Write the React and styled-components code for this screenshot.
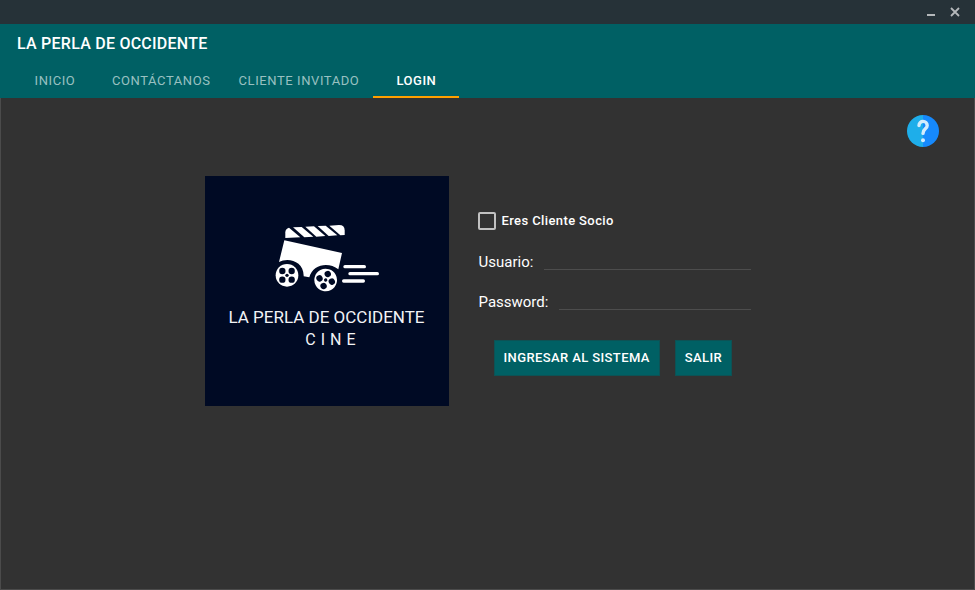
import React from "react";
import styled, { createGlobalStyle } from "styled-components";

const GlobalStyle = createGlobalStyle`
  *, *::before, *::after { box-sizing: border-box; }
  body {
    margin: 0;
    background: #323232;
    color: #ffffff;
    font-family: Roboto, "Liberation Sans", sans-serif;
  }
`;

const Window = styled.div`
  min-height: 100vh;
  display: flex;
  flex-direction: column;
`;

const TitleBar = styled.div`
  height: 24px;
  padding-right: 15px;
  display: flex;
  justify-content: flex-end;
  align-items: center;
  gap: 14px;
  background: #263238;
`;

const WindowButton = styled.button`
  width: 10px;
  height: 24px;
  padding: 0;
  border: 0;
  display: flex;
  align-items: center;
  justify-content: center;
  background: transparent;
  color: #b4b8ba;
  cursor: pointer;
`;

const Header = styled.header`
  background: #006064;
`;

const Title = styled.h1`
  margin: 0;
  padding: 8px 17px 0;
  font-size: 16px;
  line-height: 24px;
  font-weight: 500;
  letter-spacing: 0.015em;
`;

const Tabs = styled.nav`
  display: flex;
  padding: 8px 12px 0;
`;

const Tab = styled.button`
  min-width: 86px;
  height: 34px;
  padding: 2px 14px 0;
  border: 0;
  border-bottom: 2px solid ${(p) => (p.$active ? "#ffa000" : "transparent")};
  background: transparent;
  color: ${(p) => (p.$active ? "#ffffff" : "#99c0c1")};
  font: ${(p) => (p.$active ? 500 : 400)} 13px/30px Roboto, "Liberation Sans", sans-serif;
  letter-spacing: ${(p) => (p.$active ? "0.04em" : "0.045em")};
  cursor: pointer;
`;

const Body = styled.main`
  flex: 1;
  padding: 17px 35px 32px;
  border: 1px solid #4b4b4b;
  border-top: 0;
  display: flex;
  flex-direction: column;
`;

const HelpButton = styled.button`
  width: 32px;
  height: 32px;
  padding: 0;
  border: 0;
  border-radius: 50%;
  align-self: flex-end;
  display: flex;
  background: transparent;
  cursor: pointer;
`;

const Content = styled.div`
  display: flex;
  justify-content: center;
  gap: 29px;
  margin-top: 29px;
  padding-right: 20px;
`;

const Brand = styled.figure`
  width: 244px;
  height: 230px;
  margin: 0;
  padding-top: 47px;
  display: flex;
  flex-direction: column;
  align-items: center;
  background: #000a24;
  color: #f2f3f6;
`;

const BrandName = styled.figcaption`
  margin-top: 12px;
  font-size: 17px;
  line-height: 24px;
  text-align: center;
  white-space: nowrap;
`;

const BrandKind = styled.span`
  display: block;
  padding-left: 13px;
  font-size: 16px;
  letter-spacing: 5px;
  line-height: 22px;
`;

const Form = styled.form`
  width: 273px;
  padding-top: 35px;
  display: flex;
  flex-direction: column;
`;

const CheckLabel = styled.label`
  height: 20px;
  display: flex;
  align-items: center;
  gap: 6px;
  font-size: 13px;
  line-height: 20px;
  font-weight: 500;
  letter-spacing: 0.03em;
`;

const Checkbox = styled.input`
  appearance: none;
  width: 18px;
  height: 18px;
  margin: 0;
  border: 2px solid #c1c1c1;
  border-radius: 2px;
  &:checked { background: #00838f; }
`;

const Field = styled.div`
  height: 20px;
  margin-top: 20px;
  padding-left: 1px;
  display: flex;
  gap: 11px;
`;

const FieldLabel = styled.label`
  font-size: 15px;
  line-height: 22px;
`;

const TextInput = styled.input`
  flex: 1;
  min-width: 0;
  height: 19px;
  padding: 0 2px;
  border: 0;
  border-bottom: 1px solid #4d4d4d;
  outline: 0;
  background: transparent;
  color: #ffffff;
  font: 14px Roboto, sans-serif;
`;

const Actions = styled.div`
  display: flex;
  gap: 15px;
  margin-top: 29px;
  padding-left: 16px;
`;

const ActionButton = styled.button`
  height: 36px;
  padding: 0 9px;
  border: 1px solid #0d5255;
  background: #006064;
  color: #ffffff;
  font: 500 13px/20px Roboto, "Liberation Sans", sans-serif;
  letter-spacing: 0.03em;
  white-space: nowrap;
  cursor: pointer;
`;

const TABS = ["INICIO", "CONTÁCTANOS", "CLIENTE INVITADO", "LOGIN"];

function Reel({ x, y, angle }) {
  return (
    <g transform={`translate(${x} ${y}) rotate(${angle})`}>
      <circle r="34" fill="#ffffff" />
      <g fill="#000a24">
        <circle r="5" />
        <circle cx="-14" cy="-13" r="9.5" />
        <circle cx="14" cy="-13" r="9.5" />
        <circle cx="-14" cy="13" r="9.5" />
        <circle cx="14" cy="13" r="9.5" />
      </g>
    </g>
  );
}

function CinemaCart() {
  return (
    <svg width="110" height="70" viewBox="201 141 330 210" aria-hidden="true">
      <g fill="#ffffff">
        <path d="M241 186V169Q241 158 252 155L286 184Z" />
        <path d="M264 154L290 153L325 182L298 184Z" />
        <path d="M301 152L327 151L361 180L334 182Z" />
        <path d="M338 150L362 149L397 178L371 180Z" />
        <path d="M373 149L402 147Q419 147 419 163V177L406 178Z" />
        <path d="M238 193L411 231L400 280C372 257 323 264 313 304L296 301C297 255 249 243 222 258Z" />
      </g>
      <Reel x="246" y="298" angle={0} />
      <Reel x="362" y="312" angle={-28} />
      <g stroke="#ffffff" strokeWidth="10" strokeLinecap="round">
        <path d="M420 272H478" />
        <path d="M435 293H517" />
        <path d="M416 315H475" />
      </g>
    </svg>
  );
}

function HelpIcon() {
  return (
    <svg width="32" height="32" viewBox="0 0 32 32" aria-hidden="true">
      <path d="M16 0A16 16 0 0 0 16 32Z" fill="#1eaeea" />
      <path d="M16 0A16 16 0 0 1 16 32Z" fill="#1689fc" />
      <path
        d="M12 10.6C12 4.8 20.2 5.2 20.2 10.4C20.2 14 16 13.8 16 18.4"
        fill="none"
        stroke="#d2ecfd"
        strokeWidth="3.4"
        strokeLinecap="round"
        strokeLinejoin="round"
      />
      <circle cx="16" cy="25.3" r="2" fill="#d2ecfd" />
    </svg>
  );
}

export default function App() {
  return (
    <>
      <GlobalStyle />
      <Window>
        <TitleBar>
          <WindowButton type="button" aria-label="Minimizar">
            <svg width="10" height="10" viewBox="0 0 10 10">
              <path d="M1 8H9" stroke="currentColor" strokeWidth="2" />
            </svg>
          </WindowButton>
          <WindowButton type="button" aria-label="Cerrar">
            <svg width="10" height="10" viewBox="0 0 10 10">
              <path d="M1 1L9 9M9 1L1 9" stroke="currentColor" strokeWidth="1.8" />
            </svg>
          </WindowButton>
        </TitleBar>
        <Header>
          <Title>LA PERLA DE OCCIDENTE</Title>
          <Tabs>
            {TABS.map((name) => (
              <Tab key={name} type="button" $active={name === "LOGIN"}>
                {name}
              </Tab>
            ))}
          </Tabs>
        </Header>
        <Body>
          <HelpButton type="button" aria-label="Ayuda">
            <HelpIcon />
          </HelpButton>
          <Content>
            <Brand>
              <CinemaCart />
              <BrandName>
                LA PERLA DE OCCIDENTE
                <BrandKind>CINE</BrandKind>
              </BrandName>
            </Brand>
            <Form onSubmit={(e) => e.preventDefault()}>
              <CheckLabel htmlFor="socio">
                <Checkbox id="socio" type="checkbox" />
                Eres Cliente Socio
              </CheckLabel>
              <Field>
                <FieldLabel htmlFor="usuario">Usuario:</FieldLabel>
                <TextInput id="usuario" type="text" />
              </Field>
              <Field>
                <FieldLabel htmlFor="password">Password:</FieldLabel>
                <TextInput id="password" type="password" />
              </Field>
              <Actions>
                <ActionButton type="submit">INGRESAR AL SISTEMA</ActionButton>
                <ActionButton type="button">SALIR</ActionButton>
              </Actions>
            </Form>
          </Content>
        </Body>
      </Window>
    </>
  );
}
